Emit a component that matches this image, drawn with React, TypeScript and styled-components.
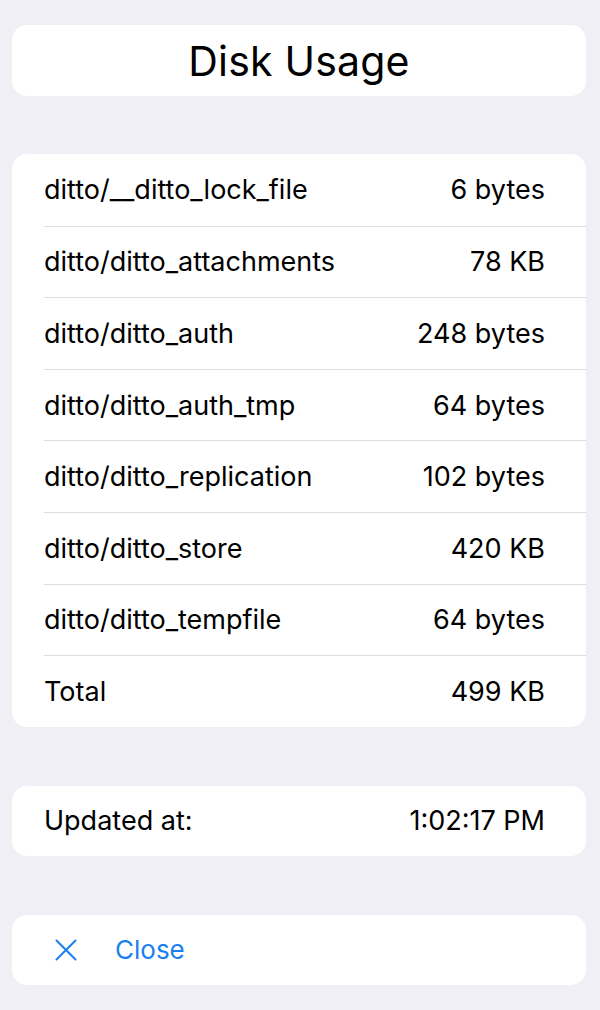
import React from "react";
import styled, { createGlobalStyle } from "styled-components";

const Global = createGlobalStyle`
  html, body { margin: 0; padding: 0; background: #f0eff5; }
  body { font-family: Inter, "Liberation Sans", Arial, sans-serif; color: #000; }
`;

const Page = styled.div`
  width: 600px;
  height: 1010px;
  box-sizing: border-box;
  padding: 25px 14px 25px 12px;
  display: flex;
  flex-direction: column;
`;

const Card = styled.div<{ $gap?: number }>`
  background: #fff;
  border-radius: 15px;
  overflow: hidden;
  flex-shrink: 0;
  margin-top: ${(p) => p.$gap ?? 0}px;
`;

const TitleCard = styled(Card)`
  height: 71px;
  display: flex;
  align-items: center;
  justify-content: center;
`;

const Title = styled.h1`
  margin: 0;
  font-size: 41px;
  font-weight: 400;
  letter-spacing: 0.2px;
`;

const Row = styled.div<{ $divider?: boolean; $h?: number }>`
  height: ${(p) => p.$h ?? 71.6}px;
  margin-left: 32px;
  padding-right: 41px;
  display: flex;
  align-items: center;
  justify-content: space-between;
  font-size: 27px;
  box-sizing: border-box;
  border-top: ${(p) => (p.$divider ? "1px solid #dedee2" : "none")};
`;

const Label = styled.span``;
const Value = styled.span``;

const CloseRow = styled.button`
  all: unset;
  height: 70px;
  width: 100%;
  display: flex;
  align-items: center;
  padding-left: 43px;
  box-sizing: border-box;
  gap: 38px;
  color: #1a7ff0;
  font-family: Inter, "Liberation Sans", Arial, sans-serif;
  font-size: 26px;
`;

const items: [string, string][] = [
  ["ditto/__ditto_lock_file", "6 bytes"],
  ["ditto/ditto_attachments", "78 KB"],
  ["ditto/ditto_auth", "248 bytes"],
  ["ditto/ditto_auth_tmp", "64 bytes"],
  ["ditto/ditto_replication", "102 bytes"],
  ["ditto/ditto_store", "420 KB"],
  ["ditto/ditto_tempfile", "64 bytes"],
  ["Total", "499 KB"],
];

export default function App() {
  return (
    <>
      <Global />
      <Page>
        <TitleCard>
          <Title>Disk Usage</Title>
        </TitleCard>
        <Card $gap={58}>
          {items.map(([k, v], i) => (
            <Row key={k} $divider={i > 0} $h={i === 7 ? 71.8 : 71.6}>
              <Label>{k}</Label>
              <Value>{v}</Value>
            </Row>
          ))}
        </Card>
        <Card $gap={59}>
          <Row $h={70}>
            <Label>Updated at:</Label>
            <Value>1:02:17 PM</Value>
          </Row>
        </Card>
        <Card $gap={59}>
          <CloseRow>
            <svg width="22" height="22" viewBox="0 0 22 22" fill="none" stroke="currentColor" strokeWidth="2" strokeLinecap="round">
              <path d="M1.5 1.5 L20.5 20.5 M20.5 1.5 L1.5 20.5" />
            </svg>
            <span>Close</span>
          </CloseRow>
        </Card>
      </Page>
    </>
  );
}
